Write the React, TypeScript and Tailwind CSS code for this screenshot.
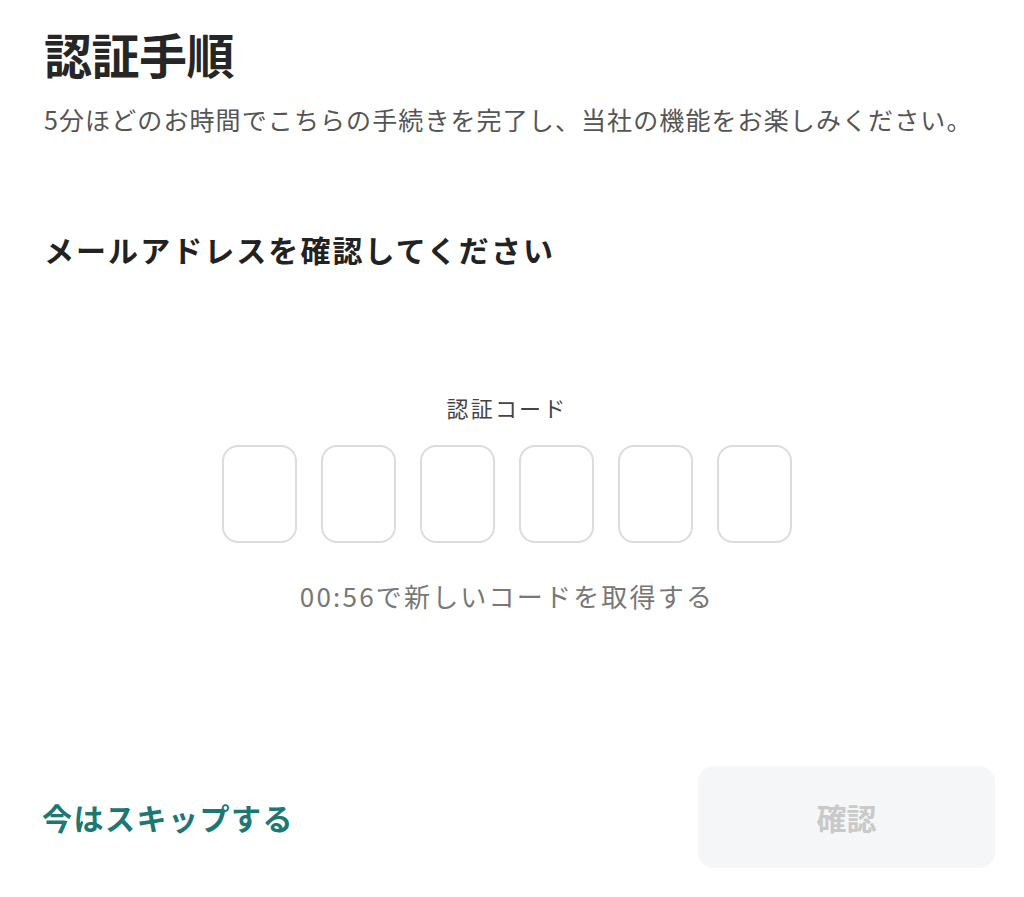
export default function App() {
  const font = { fontFamily: '"Noto Sans CJK JP", "Noto Sans", sans-serif' };
  return (
    <div
      className="w-[1024px] h-[897px] bg-white flex flex-col pl-[44px] pr-[29px] font-['Noto_Sans_CJK_JP',sans-serif]"
      style={font}
    >
      <h1 className="mt-[29px] text-[48px] leading-[48px] font-bold text-[#262626] tracking-[-0.5px]">
        認証手順
      </h1>
      <p className="mt-[30px] text-[25px] leading-[25px] text-[#555555] tracking-[1.1px] whitespace-nowrap">
        5分ほどのお時間でこちらの手続きを完了し、当社の機能をお楽しみください。
      </p>
      <h2 className="mt-[102px] text-[30px] leading-[30px] font-bold text-[#222222] tracking-[2.05px]">
        メールアドレスを確認してください
      </h2>
      <div className="w-[926px] flex flex-col items-center">
        <div className="mt-[132px] text-[22px] leading-[22px] text-[#444444] tracking-[2.2px]">
          認証コード
        </div>
        <div className="mt-[27px] flex gap-[24px]">
          {[0, 1, 2, 3, 4, 5].map((i) => (
            <div
              key={i}
              className="w-[75px] h-[98px] rounded-[16px] border-2 border-[#dcdcdc] bg-white"
            />
          ))}
        </div>
        <div className="mt-[40px] text-[26px] leading-[26px] text-[#777777] tracking-[2.2px]">
          00:56で新しいコードを取得する
        </div>
      </div>
      <div className="mt-[157px] flex items-center justify-between">
        <button className="text-[30px] leading-[30px] font-bold text-[#1b7873] tracking-[1.5px] -ml-[2px]">
          今はスキップする
        </button>
        <button className="w-[297px] h-[102px] rounded-[16px] bg-[#f5f6f7] text-[30px] font-bold text-[#c9c9c9]">
          確認
        </button>
      </div>
    </div>
  );
}
